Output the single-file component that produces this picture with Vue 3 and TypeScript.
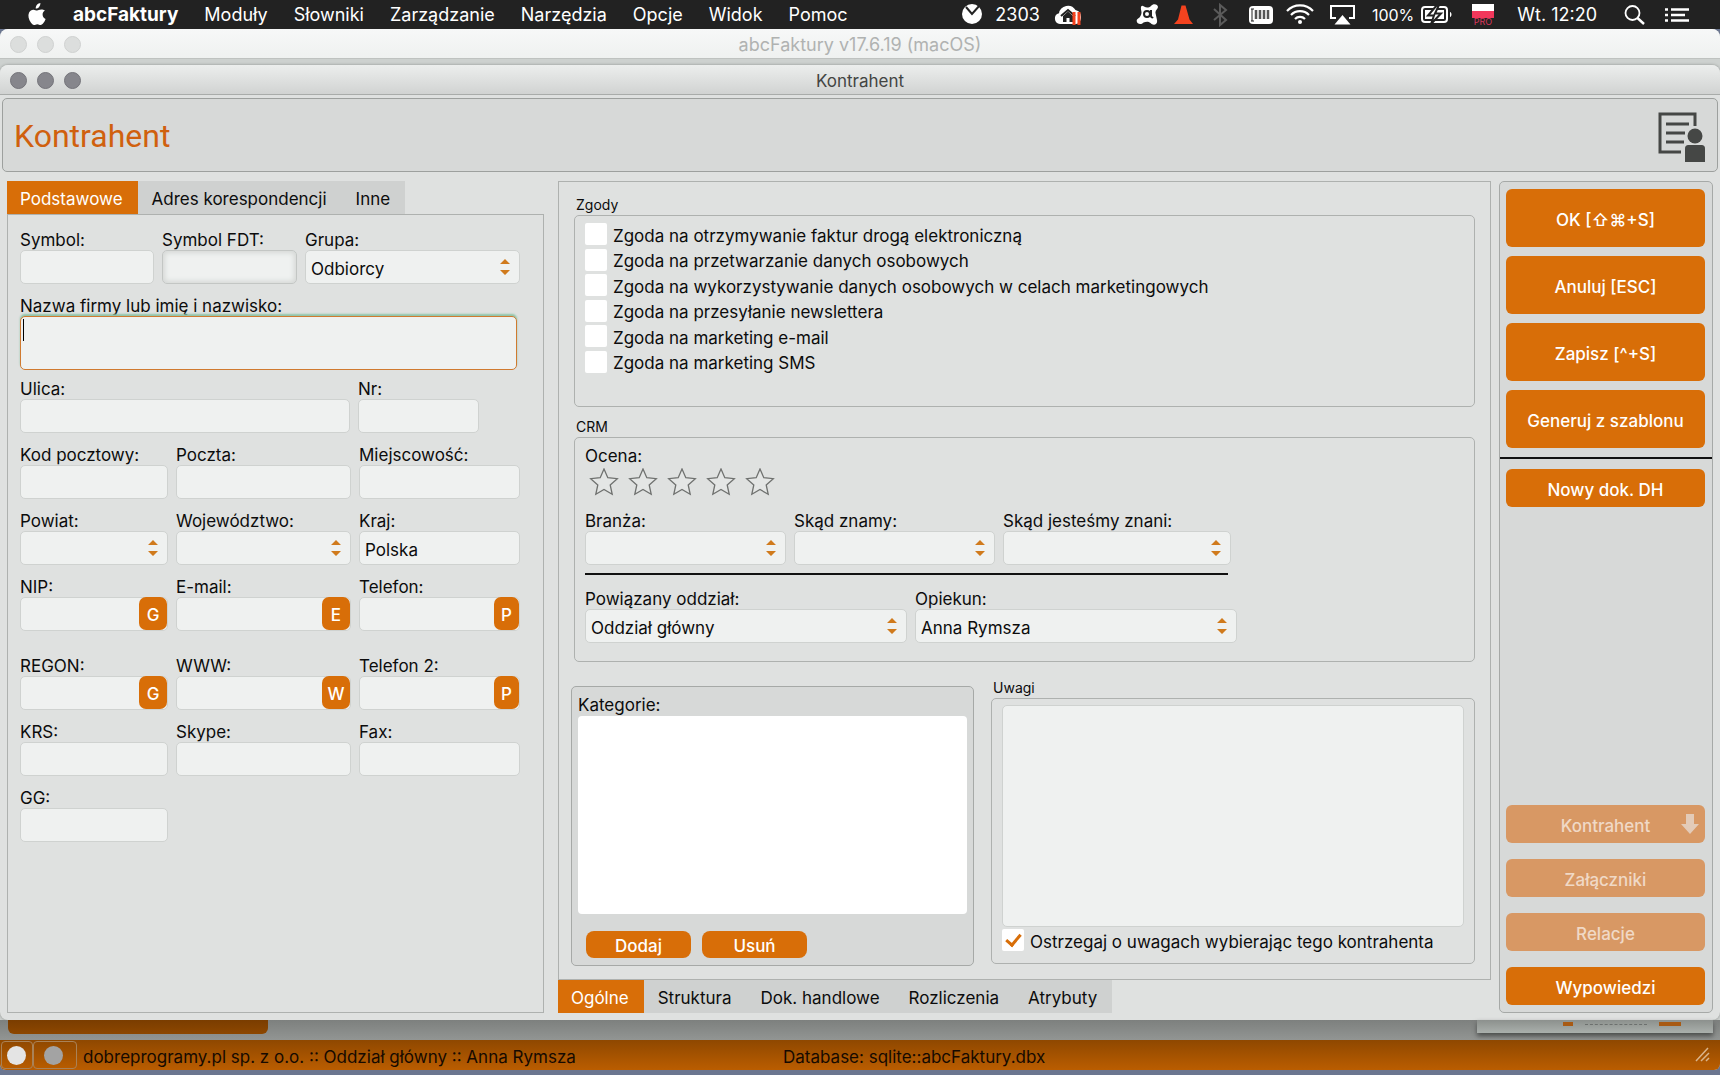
<script setup lang="ts">
import { ref } from 'vue'

interface Field {
  id: string
  label: string
  width: number
  kind?: 'text' | 'select' | 'inset'
  value?: string
  action?: string
}

const menus = ['Moduły', 'Słowniki', 'Zarządzanie', 'Narzędzia', 'Opcje', 'Widok', 'Pomoc']

const topRow: Field[] = [
  { id: 'symbol', label: 'Symbol:', width: 134 },
  { id: 'symbol-fdt', label: 'Symbol FDT:', width: 135, kind: 'inset' },
  { id: 'grupa', label: 'Grupa:', width: 215, kind: 'select', value: 'Odbiorcy' },
]

const rows: Field[][] = [
  [
    { id: 'ulica', label: 'Ulica:', width: 330 },
    { id: 'nr', label: 'Nr:', width: 121 },
  ],
  [
    { id: 'kod', label: 'Kod pocztowy:', width: 148 },
    { id: 'poczta', label: 'Poczta:', width: 175 },
    { id: 'miejscowosc', label: 'Miejscowość:', width: 161 },
  ],
  [
    { id: 'powiat', label: 'Powiat:', width: 148, kind: 'select' },
    { id: 'wojewodztwo', label: 'Województwo:', width: 175, kind: 'select' },
    { id: 'kraj', label: 'Kraj:', width: 161, value: 'Polska' },
  ],
  [
    { id: 'nip', label: 'NIP:', width: 148, action: 'G' },
    { id: 'email', label: 'E-mail:', width: 175, action: 'E' },
    { id: 'telefon', label: 'Telefon:', width: 161, action: 'P' },
  ],
  [
    { id: 'regon', label: 'REGON:', width: 148, action: 'G' },
    { id: 'www', label: 'WWW:', width: 175, action: 'W' },
    { id: 'telefon2', label: 'Telefon 2:', width: 161, action: 'P' },
  ],
  [
    { id: 'krs', label: 'KRS:', width: 148 },
    { id: 'skype', label: 'Skype:', width: 175 },
    { id: 'fax', label: 'Fax:', width: 161 },
  ],
  [{ id: 'gg', label: 'GG:', width: 148 }],
]

const consents = [
  'Zgoda na otrzymywanie faktur drogą elektroniczną',
  'Zgoda na przetwarzanie danych osobowych',
  'Zgoda na wykorzystywanie danych osobowych w celach marketingowych',
  'Zgoda na przesyłanie newslettera',
  'Zgoda na marketing e-mail',
  'Zgoda na marketing SMS',
]

const crmSource: Field[] = [
  { id: 'branza', label: 'Branża:', width: 201 },
  { id: 'skad-znamy', label: 'Skąd znamy:', width: 201 },
  { id: 'skad-znani', label: 'Skąd jesteśmy znani:', width: 228 },
]
const crmOwner: Field[] = [
  { id: 'oddzial', label: 'Powiązany oddział:', width: 322, value: 'Oddział główny' },
  { id: 'opiekun', label: 'Opiekun:', width: 322, value: 'Anna Rymsza' },
]

const leftTabs = ['Podstawowe', 'Adres korespondencji', 'Inne']
const bottomTabs = ['Ogólne', 'Struktura', 'Dok. handlowe', 'Rozliczenia', 'Atrybuty']
const leftTab = ref(leftTabs[0])
const bottomTab = ref(bottomTabs[0])
const rating = ref(0)
const warn = ref(true)
</script>

<template>
  <div class="screen">
    <header class="menubar">
      <nav class="menus">
        <svg class="apple" width="20" height="24" viewBox="0 0 20 24" aria-hidden="true">
          <path fill="#fff" d="M13.4 1c.1 1.500-.5 2.900-1.300 3.900-.9 1-2.200 1.700-3.400 1.600-.1-1.400.5-2.800 1.300-3.700C10.900 1.800 12.300 1.100 13.400 1zM18 8.600c-1.600 1-2.400 2.300-2.400 4 0 2 1.200 3.700 3 4.300-.5 1.500-1.300 2.900-2.200 4.200-.8 1.100-1.600 1.900-2.800 1.900-1.300 0-1.700-.8-3.300-.8s-2 .8-3.300.8c-1.200 0-2.100-1-3-2.200C1.600 17.400.7 13.700 2 10.800c.9-1.900 2.600-3.100 4.400-3.100 1.500 0 2.600.9 3.700.9 1 0 2.300-1 4.100-1 1.500 0 2.900.5 3.800 1z" />
        </svg>
        <a href="#" class="app-name">abcFaktury</a>
        <a v-for="m in menus" :key="m" href="#">{{ m }}</a>
      </nav>
      <div class="tray">
        <svg width="22" height="29" viewBox="0 0 22 29">
          <circle cx="11" cy="14" r="10" fill="#fff" />
          <path d="M5 7l6 7 8-9" fill="none" stroke="#222" stroke-width="2" />
        </svg>
        <span>2303</span>
        <svg width="72" height="29" viewBox="0 0 72 29">
          <path d="M8 24a5.500 5.500 0 0 1-1-10.800A9 9 0 0 1 23.500 10 7 7 0 0 1 29 17c0 4-2 7-5 7z" fill="#fff" />
          <path d="M9 16l7-6 7 6" fill="none" stroke="#222" stroke-width="2" />
          <path d="M11 16l5-4.500 5 4.500v6h-3.500v-4h-3v4H11z" fill="#222" />
          <path d="M22 12v13M27 12v13" stroke="#f4431f" stroke-width="3" />
        </svg>
        <svg width="24" height="29" viewBox="0 0 24 29">
          <path d="M8 6.500c3 2 5 1 7-.5 2-3 7-2 7 1 0 2-3 3-2.500 6l1.500 7c1 5-4 6-6.500 3-2.500-2-5-1-7-.5-2 2-4 2-6 .5-2-3 0-4 2-5.500C5.500 15 6 13 5 9.500 4.500 6 6 5 8 6.500z" fill="#fff" />
          <circle cx="11" cy="14" r="3" fill="none" stroke="#222" stroke-width="2" />
          <path d="M15 10v6c0 1 1 2 2 1" fill="none" stroke="#222" stroke-width="2" />
        </svg>
        <svg width="26" height="29" viewBox="0 0 26 29">
          <path d="M9.500 5.500h4l4 14 3.500 4.500H2l4-4.500z" fill="#f4431f" />
        </svg>
        <svg width="26" height="29" viewBox="0 0 26 29">
          <path d="M4 9l12 11-6 5V5l6 5L4 20" fill="none" stroke="#5b5b5b" stroke-width="2" />
        </svg>
        <svg width="26" height="29" viewBox="0 0 26 29">
          <rect x="1" y="6" width="24" height="18" rx="4" fill="#fff" />
          <path d="M4 9v12M3 9h3M3 21h3" stroke="#222" stroke-width="1" />
          <path d="M8 10v9M12 10v9M16 10v9M20 10v9" stroke="#555" stroke-width="2.500" />
        </svg>
        <svg width="32" height="29" viewBox="0 0 32 29">
          <g fill="none" stroke="#fff" stroke-width="2.200">
            <path d="M1 11a18 18 0 0 1 26 0" />
            <path d="M5 15a12.500 12.500 0 0 1 18 0" />
            <path d="M9 19a7 7 0 0 1 10 0" />
          </g>
          <circle cx="14" cy="22" r="2" fill="#fff" />
        </svg>
        <svg width="30" height="29" viewBox="0 0 30 29">
          <path d="M6 18H1V6h23v12h-5" fill="none" stroke="#fff" stroke-width="2" />
          <path d="M12.500 15l8 9.500h-16z" fill="#fff" />
        </svg>
        <span class="power">
          <span class="percent">100%</span>
          <svg width="38" height="29" viewBox="0 0 38 29">
            <rect x="1" y="7" width="25" height="15" rx="3" fill="none" stroke="#fff" stroke-width="2" />
            <path d="M4 10h19v9H4z" fill="#fff" />
            <path d="M16 5L7 15.500h6L10 24l10-10.500h-6L18 5z" fill="#fff" stroke="#222" stroke-width="2" />
            <path d="M29 12c2 .5 2 4.500 0 5z" fill="#fff" />
          </svg>
        </span>
        <svg width="34" height="29" viewBox="0 0 34 29">
          <path d="M1 4h22v7H1z" fill="#fff" />
          <path d="M1 11h22v7H1z" fill="#f2375b" />
          <text x="12" y="25" text-anchor="middle" class="flag-text">PRO</text>
        </svg>
        <span>Wt. 12:20</span>
        <svg width="44" height="29" viewBox="0 0 44 29">
          <circle cx="23.500" cy="13" r="7" fill="none" stroke="#fff" stroke-width="1.800" />
          <path d="M28.500 18l6.500 6" stroke="#fff" stroke-width="2.400" />
        </svg>
        <svg width="24" height="29" viewBox="0 0 24 29">
          <path d="M0 9.500h3M0 15h3M0 20.500h3M6 9.500h18M6 15h14M6 20.500h18" stroke="#fff" stroke-width="2.400" />
        </svg>
      </div>
    </header>

    <div class="main-window">
      <div class="titlebar inactive">
        <span class="lights"><i></i><i></i><i></i></span>
        <span class="title">abcFaktury v17.6.19 (macOS)</span>
      </div>

      <section class="dialog">
        <div class="titlebar">
          <span class="lights"><i></i><i></i><i></i></span>
          <span class="title">Kontrahent</span>
        </div>
        <div class="banner">
          <h1>Kontrahent</h1>
          <svg width="48" height="52" viewBox="0 0 48 52" aria-hidden="true">
            <path d="M23 40H2V2h35v12" fill="none" stroke="#454745" stroke-width="3" />
            <path d="M8 12h23M8 21h19M8 30h18" stroke="#454745" stroke-width="3" />
            <circle cx="37" cy="24" r="7.500" fill="#454745" />
            <path d="M27 50V37c0-3 1-4 4-4h12c3 0 4 1 4 4v13z" fill="#454745" />
          </svg>
        </div>

        <div class="body">
          <div class="left">
            <div class="tabs">
              <button
                v-for="t in leftTabs"
                :key="t"
                type="button"
                :class="{ active: t === leftTab }"
                @click="leftTab = t"
              >{{ t }}</button>
            </div>
            <div class="left-panel">
              <div class="row">
                <div v-for="f in topRow" :key="f.id" class="field" :style="{ width: f.width + 'px' }">
                  <label :for="f.id">{{ f.label }}</label>
                  <span v-if="f.kind === 'select'" class="select">
                    <select :id="f.id"><option>{{ f.value }}</option></select>
                    <svg width="10" height="16" viewBox="0 0 10 16"><path d="M0 5l5-5 5 5zM0 11l5 5 5-5z" fill="#d07a1c" /></svg>
                  </span>
                  <input v-else :id="f.id" type="text" :class="{ inset: f.kind === 'inset' }" />
                </div>
              </div>
              <div class="field name-field">
                <label for="nazwa">Nazwa firmy lub imię i nazwisko:</label>
                <span class="name-box">
                  <textarea id="nazwa"></textarea>
                  <i class="caret"></i>
                </span>
              </div>
              <div v-for="(row, i) in rows" :key="i" class="row" :class="{ spaced: i === 3 }">
                <div v-for="f in row" :key="f.id" class="field" :style="{ width: f.width + 'px' }">
                  <label :for="f.id">{{ f.label }}</label>
                  <span v-if="f.kind === 'select'" class="select">
                    <select :id="f.id"><option></option></select>
                    <svg width="10" height="16" viewBox="0 0 10 16"><path d="M0 5l5-5 5 5zM0 11l5 5 5-5z" fill="#d07a1c" /></svg>
                  </span>
                  <span v-else-if="f.action" class="with-action">
                    <input :id="f.id" type="text" />
                    <button type="button" :class="{ narrow: f.action === 'P' }">{{ f.action }}</button>
                  </span>
                  <input v-else :id="f.id" type="text" :value="f.value" />
                </div>
              </div>
            </div>
          </div>

          <div class="middle">
            <div class="middle-panel">
              <fieldset class="group consents">
                <legend>Zgody</legend>
                <div class="box">
                  <label v-for="c in consents" :key="c" class="check">
                    <input type="checkbox" />
                    <span>{{ c }}</span>
                  </label>
                </div>
              </fieldset>

              <fieldset class="group crm">
                <legend>CRM</legend>
                <div class="box">
                  <span class="rating-label">Ocena:</span>
                  <div class="stars">
                    <button v-for="n in 5" :key="n" type="button" :aria-label="'Ocena ' + n" @click="rating = n">
                      <svg width="30" height="28" viewBox="0 0 30 28">
                        <path
                          d="M15 1l3.800 8.700 9.500 1-7.100 6.300 2 9.300-8.200-4.800-8.200 4.800 2-9.300-7.100-6.300 9.500-1z"
                          :fill="n <= rating ? '#d86e08' : '#e4e6e5'"
                          stroke="#6f716f"
                          stroke-width="1.300"
                        />
                      </svg>
                    </button>
                  </div>
                  <div class="row source">
                    <div v-for="f in crmSource" :key="f.id" class="field" :style="{ width: f.width + 'px' }">
                      <label :for="f.id">{{ f.label }}</label>
                      <span class="select">
                        <select :id="f.id"><option></option></select>
                        <svg width="10" height="16" viewBox="0 0 10 16"><path d="M0 5l5-5 5 5zM0 11l5 5 5-5z" fill="#d07a1c" /></svg>
                      </span>
                    </div>
                  </div>
                  <hr />
                  <div class="row owner">
                    <div v-for="f in crmOwner" :key="f.id" class="field" :style="{ width: f.width + 'px' }">
                      <label :for="f.id">{{ f.label }}</label>
                      <span class="select">
                        <select :id="f.id"><option>{{ f.value }}</option></select>
                        <svg width="10" height="16" viewBox="0 0 10 16"><path d="M0 5l5-5 5 5zM0 11l5 5 5-5z" fill="#d07a1c" /></svg>
                      </span>
                    </div>
                  </div>
                </div>
              </fieldset>

              <div class="lower">
                <div class="categories">
                  <span class="list-label">Kategorie:</span>
                  <div class="list"></div>
                  <div class="list-actions">
                    <button type="button" class="btn">Dodaj</button>
                    <button type="button" class="btn">Usuń</button>
                  </div>
                </div>
                <fieldset class="group notes">
                  <legend>Uwagi</legend>
                  <div class="box">
                    <textarea aria-label="Uwagi"></textarea>
                    <label class="check">
                      <input v-model="warn" type="checkbox" />
                      <span>Ostrzegaj o uwagach wybierając tego kontrahenta</span>
                    </label>
                  </div>
                </fieldset>
              </div>
            </div>
            <div class="tabs">
              <button
                v-for="t in bottomTabs"
                :key="t"
                type="button"
                :class="{ active: t === bottomTab }"
                @click="bottomTab = t"
              >{{ t }}</button>
            </div>
          </div>

          <aside class="actions">
            <div class="large">
              <button type="button" class="btn">OK [⇧⌘+S]</button>
              <button type="button" class="btn">Anuluj [ESC]</button>
              <button type="button" class="btn">Zapisz [^+S]</button>
              <button type="button" class="btn">Generuj z szablonu</button>
            </div>
            <hr />
            <div class="small">
              <button type="button" class="btn">Nowy dok. DH</button>
            </div>
            <div class="small bottom">
              <button type="button" class="btn" disabled>
                Kontrahent
                <svg width="18" height="20" viewBox="0 0 18 20"><path d="M5 0h8v10h5l-9 10-9-10h5z" fill="#e3cbb8" /></svg>
              </button>
              <button type="button" class="btn" disabled>Załączniki</button>
              <button type="button" class="btn" disabled>Relacje</button>
              <button type="button" class="btn">Wypowiedzi</button>
            </div>
          </aside>
        </div>
      </section>

      <div class="behind">
        <span class="behind-button"></span>
        <span class="behind-window"><i></i><b></b><i class="wide"></i></span>
      </div>

      <footer class="status">
        <span class="lamp"><i></i></span>
        <span class="lamp second"><i></i></span>
        <span class="company">dobreprogramy.pl sp. z o.o. :: Oddział główny :: Anna Rymsza</span>
        <span class="database">Database: sqlite::abcFaktury.dbx</span>
        <svg width="16" height="16" viewBox="0 0 16 16"><path d="M1 14L13 1M6 14l8-8M11 14l3-3" stroke="#d9b48c" stroke-width="1.500" /></svg>
      </footer>
    </div>
  </div>
</template>

<style>
body {
  margin: 0;
  background: #6b7690;
}
</style>

<style scoped>
* {
  box-sizing: border-box;
}
.screen {
  display: flex;
  flex-direction: column;
  min-height: 100vh;
  padding-bottom: 5px;
  background: #6b7690;
  color: #0c0c0c;
  font: 17px/20px Inter, "Liberation Sans", sans-serif;
}
button,
input,
select,
textarea {
  font: inherit;
  color: inherit;
  margin: 0;
}
button {
  border: 0;
  cursor: pointer;
}

/* menu bar */
.menubar {
  display: flex;
  justify-content: space-between;
  height: 29px;
  padding: 0 31px 0 27px;
  background: #222;
  color: #fff;
  font-size: 18px;
  line-height: 30px;
  white-space: nowrap;
}
.menus {
  display: flex;
  gap: 26px;
}
.apple {
  margin-top: 2px;
}
.menus a {
  color: inherit;
  text-decoration: none;
}
.menus .app-name {
  font-size: 19px;
  font-weight: 700;
}
.tray,
.power {
  display: flex;
  gap: 12px;
}
.power {
  gap: 7px;
}
.percent {
  font-size: 16px;
}
.flag-text {
  fill: #d8365a;
  font-size: 9px;
}

/* windows */
.main-window {
  flex: 1;
  display: flex;
  flex-direction: column;
  border-radius: 8px 8px 6px 6px;
  overflow: hidden;
  background: #cdd1cf;
}
.titlebar {
  display: grid;
  grid-template-columns: 1fr auto 1fr;
  align-items: center;
  height: 30px;
  padding: 2px 10px 0;
  border-bottom: 1px solid #a9acaa;
  border-radius: 8px 8px 0 0;
  background: linear-gradient(#eceeed, #d1d3d2);
  color: #434543;
}
.titlebar.inactive {
  border-radius: 0;
  border-color: #bfc2c0;
  background: linear-gradient(#f7f8f8, #eff1f0);
  color: #b0b2b1;
  font-size: 18px;
}
.lights {
  display: flex;
  gap: 10px;
}
.lights i {
  width: 17px;
  height: 17px;
  border: 1px solid #74747a;
  border-radius: 50%;
  background: #86868c;
}
.inactive .lights i {
  border-color: #cfd1d0;
  background: #dcdedd;
}
.dialog {
  flex: 1;
  display: flex;
  flex-direction: column;
  margin-top: 6px;
  border-radius: 8px;
  background: #dfe1e0;
  box-shadow: 0 0 3px #8a8d8b;
}
.banner {
  display: flex;
  justify-content: space-between;
  align-items: center;
  height: 74px;
  margin: 3px 2px 0;
  padding: 2px 11px 0;
  border: 1px solid #9da09e;
  border-radius: 5px;
  background: #d7d9d8;
}
h1 {
  margin: 0;
  color: #d0600e;
  font: 400 32px/40px Roboto, "Liberation Sans", sans-serif;
}
.banner svg {
  margin-top: 4px;
}
.body {
  flex: 1;
  display: flex;
  padding: 9px 7px 7px;
}

/* tabs */
.tabs {
  display: flex;
}
.tabs button {
  height: 33px;
  padding: 3px 15px 0 14px;
  border-radius: 0;
  background: #cfd1d0;
}
.tabs button.active {
  padding-left: 13px;
  background: #d86e08;
  color: #fff;
}

/* fields */
.left {
  display: flex;
  flex-direction: column;
  width: 537px;
}
.left-panel {
  flex: 1;
  padding: 15px 12px;
  border: 1px solid #aeb1af;
}
.row {
  display: flex;
  gap: 8px;
  margin-bottom: 12px;
}
.row.spaced {
  margin-bottom: 25px;
}
.field {
  display: flex;
  flex-direction: column;
}
.field label {
  height: 20px;
  white-space: nowrap;
}
.field input,
select,
textarea {
  width: 100%;
  height: 34px;
  padding: 3px 5px 0;
  border: 1px solid #cfd2d0;
  border-radius: 5px;
  outline: 0;
  background: #eff1f0;
}
.field input.inset {
  border-color: #c3c6c4;
  box-shadow: inset 0 0 5px 2px #d5d8d6;
}
select {
  appearance: none;
}
.select,
.with-action,
.name-box {
  position: relative;
  display: block;
  height: 34px;
}
.select svg {
  position: absolute;
  top: 9px;
  right: 10px;
  pointer-events: none;
}
.with-action button {
  position: absolute;
  top: 0;
  right: 1px;
  width: 28px;
  height: 33px;
  padding: 3px 0 0;
  border-radius: 7px;
  background: #d86e08;
  color: #fff;
  font-weight: 500;
}
.with-action .narrow {
  width: 25px;
}
.name-field {
  width: 497px;
  margin-bottom: 9px;
}
.name-box {
  height: 54px;
}
textarea {
  display: block;
  resize: none;
}
.name-box textarea {
  height: 54px;
  border-color: #d07a30;
  box-shadow: 0 -2px 2px #8fc4a8;
}
.caret {
  position: absolute;
  top: 3px;
  left: 3px;
  width: 1px;
  height: 22px;
  background: #000;
}

/* middle */
.middle {
  flex: 1;
  display: flex;
  flex-direction: column;
  margin: 0 8px 0 14px;
}
.middle-panel {
  flex: 1;
  display: flex;
  flex-direction: column;
  padding: 13px 15px 13px 12px;
  border: 1px solid #aeb1af;
}
.group {
  min-width: 0;
  margin: 0 0 0 3px;
  padding: 0;
  border: 0;
}
.group legend {
  height: 20px;
  padding: 0 2px;
  font-size: 14px;
}
.group .box {
  border: 1px solid #aeb1af;
  border-radius: 5px;
}
.consents .box {
  display: flex;
  flex-direction: column;
  justify-content: space-between;
  height: 192px;
  padding: 7px 10px 33px;
}
.check {
  display: flex;
  align-items: center;
  gap: 6px;
  height: 22px;
  white-space: nowrap;
}
.check span {
  padding-top: 3px;
}
.check input {
  appearance: none;
  display: grid;
  place-items: center;
  width: 22px;
  height: 22px;
  border-radius: 2px;
  background: #fff;
}
.check input:checked::before {
  content: "";
  width: 6px;
  height: 12px;
  margin-top: -4px;
  border: solid #d86e08;
  border-width: 0 3px 3px 0;
  transform: rotate(40deg);
}
.crm {
  margin-top: 10px;
}
.crm .box {
  height: 225px;
  padding: 8px 10px;
}
.rating-label {
  display: block;
}
.stars {
  display: flex;
  gap: 9px;
  height: 45px;
  padding: 2px 4px;
}
.stars button {
  width: 30px;
  height: 28px;
  padding: 0;
  background: none;
}
.row.source {
  margin-bottom: 8px;
}
hr {
  height: 2px;
  margin: 0;
  border: 0;
  background: #111;
}
.crm hr {
  width: 643px;
}
.row.owner {
  margin: 14px 0 0;
}
.lower {
  flex: 1;
  display: flex;
  align-items: stretch;
  justify-content: space-between;
  gap: 17px;
  margin-top: 16px;
}
.categories {
  display: flex;
  flex-direction: column;
  width: 403px;
  margin-top: 8px;
  padding: 8px 6px 7px;
  border: 1px solid #a6a9a7;
  border-radius: 5px;
  background: #d7d9d8;
}
.list-label {
  height: 21px;
}
.list {
  flex: 1;
  border-radius: 4px;
  background: #fff;
}
.list-actions {
  display: flex;
  gap: 11px;
  padding: 17px 8px 0;
}
.list-actions .btn {
  width: 105px;
  height: 27px;
  border-radius: 8px;
}
.notes {
  flex: 1;
  display: flex;
  flex-direction: column;
  margin: 0;
}
.notes .box {
  flex: 1;
  display: flex;
  flex-direction: column;
  gap: 2px;
  margin-bottom: 2px;
  padding: 6px 10px 12px;
}
.notes textarea {
  flex: 1;
}

/* right column */
.btn {
  position: relative;
  padding: 3px 0 0;
  border-radius: 6px;
  background: #d86e08;
  color: #fff;
  font-weight: 500;
}
.btn:disabled {
  background: #d89864;
  color: #f0d9c6;
}
.btn svg {
  position: absolute;
  top: 9px;
  right: 6px;
}
.actions {
  display: flex;
  flex-direction: column;
  width: 214px;
  border: 1px solid #a6a9a7;
  border-radius: 5px;
  background: #d7d9d8;
}
.large,
.small {
  display: flex;
  flex-direction: column;
  gap: 9px;
  padding: 7px 7px 9px 6px;
}
.large .btn {
  height: 58px;
}
.small {
  gap: 16px;
  padding: 10px 7px 7px 6px;
}
.small .btn {
  height: 38px;
}
.bottom {
  margin-top: auto;
}

/* parts of the main window below the dialog */
.behind {
  display: flex;
  justify-content: space-between;
  align-items: flex-start;
  height: 20px;
  padding: 0 7px 0 8px;
  background: linear-gradient(#7d807e, #929593);
}
.behind-button {
  width: 260px;
  height: 14px;
  border-radius: 0 0 6px 6px;
  background: linear-gradient(#7a3d00, #8d4700);
}
.behind-window {
  display: flex;
  gap: 12px;
  width: 236px;
  height: 13px;
  padding: 2px 32px 0 86px;
  background: linear-gradient(#8c908d, #aab0ac);
  box-shadow: 0 3px 5px #4b4d4c;
}
.behind-window i {
  width: 10px;
  height: 4px;
  background: #a85a14;
}
.behind-window b {
  flex: 1;
  height: 3px;
  border-bottom: 1px dashed #6c706e;
}
.behind-window .wide {
  width: 22px;
}
.status {
  display: flex;
  align-items: center;
  height: 30px;
  padding: 0 9px 0 1px;
  background: linear-gradient(#8f4800, #ba5d00);
  color: #160a00;
}
.lamp {
  display: flex;
  align-items: center;
  width: 32px;
  height: 28px;
  padding-left: 5px;
  border: 1px solid #a98258;
  border-radius: 4px;
}
.lamp.second {
  width: 44px;
  padding-left: 10px;
}
.lamp i {
  width: 19px;
  height: 19px;
  border-radius: 50%;
  background: #e4e4e4;
}
.lamp.second i {
  background: #a3a3a3;
}
.company {
  width: 706px;
  padding: 4px 0 0 6px;
}
.database {
  flex: 1;
  padding-top: 4px;
}
</style>
